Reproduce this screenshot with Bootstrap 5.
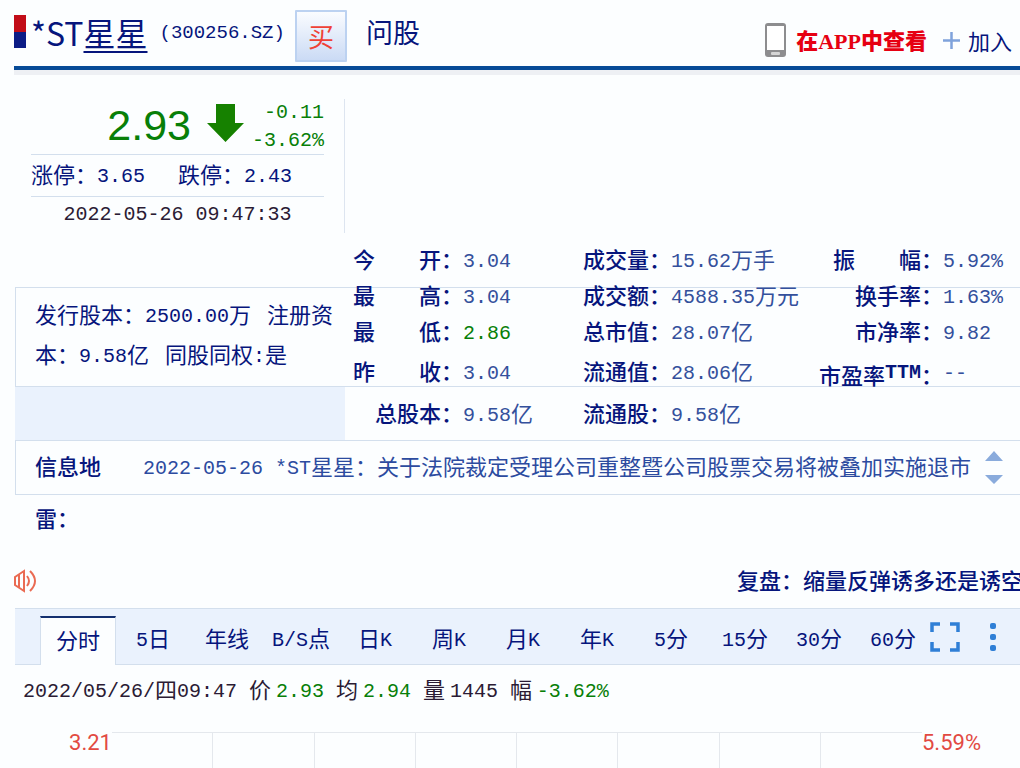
<!DOCTYPE html>
<html lang="zh-CN">
<head>
<meta charset="utf-8">
<meta name="viewport" content="width=device-width, initial-scale=1">
<title>*ST星星 (300256.SZ)</title>
<link href="https://cdn.jsdelivr.net/npm/bootstrap@5.3.0/dist/css/bootstrap.min.css" rel="stylesheet">
<script src="https://cdn.jsdelivr.net/npm/bootstrap@5.3.0/dist/js/bootstrap.bundle.min.js"></script>
<style>
:root{--navy:#06157c;--soft:#34509c;--rule:#d3dfed;--fall:#087f08;--pale:#eaf2fd}
body{background:#fcfeff;color:var(--navy);font:22px/36px "Noto Sans CJK SC",sans-serif;overflow-x:hidden}
a{color:inherit;text-decoration:none}
button{font-family:inherit;color:inherit}
.num{font:20px/20px "Liberation Mono","Noto Sans CJK SC",monospace;vertical-align:1px}
.fall{color:var(--fall)}
.page{padding-left:14px}
.topbar{height:70px;padding-top:6px;border-bottom:4px solid #074b97;box-shadow:0 5px 0 #eef0f4}
.flag{width:12px;height:33px;margin-bottom:9px;background:linear-gradient(#c20d18 52%,#0c1c86 52%)}
.stock{font:32px/44px "Noto Sans CJK SC",sans-serif;margin:0 0 9px 5px}
.stock a{text-decoration:underline;text-decoration-thickness:2px;text-underline-offset:5px}
.code{font-size:19px;margin:0 10px 6px 12px}
.buy{width:52px;height:52px;padding:0;border:2px solid #bcd2f1;border-radius:1px;background:linear-gradient(#fafcff,#cbdbf5);color:#ef4136;font-size:26px}
.ask{font-size:27px;margin:0 0 9px 19px}
.inapp{color:#e60012;font:bold 22px/36px "Liberation Serif","Noto Sans CJK SC",serif}
.inapp b{font:900 22px/36px "Noto Sans CJK SC",sans-serif}
.overview{display:grid;grid-template-columns:331px 1fr;grid-template-rows:minmax(217px,auto) minmax(100px,auto) minmax(53px,auto)}
.quote{grid-area:1/1;margin:29px 0 54px;padding:0 20px 0 17px;border-right:1px solid #dde5f0}
.pricebox{height:56px;border-bottom:1px solid var(--rule)}
.price{font:43px/52px "Liberation Sans",sans-serif}
.change{line-height:28px;margin-top:-4px}
.limits{height:42px;padding-bottom:6px;border-bottom:1px solid var(--rule)}
.stamp{padding-top:8px;color:#2b1b34}
.band{grid-area:2/1/3/3;border:1px solid var(--rule);border-right:0;margin-left:1px}
.issue{width:330px;padding:5px 0 13px 19px;line-height:40px}
.filler{grid-area:3/1;background:var(--pale);margin-left:1px}
.stats{grid-area:1/2/4/3;align-self:end;table-layout:fixed;width:100%;margin-bottom:8px;border-collapse:collapse}
.stats th{font-weight:500;text-align:right;white-space:pre}
.stats td{color:var(--soft);white-space:nowrap}
.stats th,.stats td{padding:0;height:36px;line-height:36px}
.stats .tall>*{height:44px}
.stats .low>*{height:40px}
.stats .ttm{padding-top:8px}
.stats sup{font:bold 20px/20px "Liberation Mono",monospace;top:-6px}
.news{height:55px;margin-left:1px;padding-left:19px;border:1px solid var(--rule);border-right:0}
.news-label{width:108px;padding-right:32px;line-height:52px;margin-top:-2px;font-weight:500}
.news a{color:#2c4b9f;line-height:48px}
.voice{margin-top:68px;height:36px}
.marquee{flex:0 0 283px;font-weight:500;padding-bottom:4px}
.period{height:57px;margin:9px 0 0 1px;padding-left:25px;background:var(--pale);border:solid var(--rule);border-width:1px 0}
.period .tab{flex:1 0 0;margin-top:7px;padding:0 0 6px;border:0;background:none;font-size:22px;line-height:40px;white-space:nowrap}
.period .tab.active{background:#fcfeff;border:solid var(--rule);border-width:2px 1px 0;border-top-color:#14306f;margin-bottom:-1px}
.tools{width:90px}
.tools button{border:0;background:none;padding:0;line-height:0}
.readout{color:#2b1b34;padding:5px 0 0 9px;white-space:pre}
.chart{display:grid;grid-template-columns:98px repeat(8,1fr) 98px;margin-top:26px;height:38px;color:#e24a42;font:22px/22px Roboto,sans-serif}
.chart i{border-top:1px solid #e4e8ed;border-right:1px solid #e4e8ed}
.chart i:nth-of-type(8){border-right:0}
</style>
</head>
<body>
<main class="page">
  <header class="topbar d-flex align-items-center">
    <span class="flag"></span>
    <h1 class="stock text-nowrap">*ST<a href="#">星星</a></h1>
    <span class="num code">(300256.SZ)</span>
    <button type="button" class="buy">买</button>
    <a href="#" class="ask">问股</a>
    <div class="d-flex align-items-center ms-auto pt-2 text-nowrap">
      <svg class="me-2" width="24" height="36" viewBox="0 0 24 36" aria-hidden="true"><rect x="1" y="1" width="21" height="34" rx="3" fill="#8d8d8f"/><rect x="3" y="4" width="17" height="24" fill="#fff"/><rect x="7" y="30" width="9" height="3" rx="1" fill="#d5d5d5"/></svg>
      <a href="#" class="inapp"><b>在</b>APP<b>中查看</b></a>
      <a href="#" class="d-flex align-items-center ms-2 me-2 ps-1"><svg class="me-2 ms-1" width="17" height="17" viewBox="0 0 17 17" aria-hidden="true"><path d="M8.500 0V17M0 8.500H17" stroke="#7fa3dc" stroke-width="2.500"/></svg>加入</a>
    </div>
  </header>

  <section class="overview">
    <div class="quote">
      <div class="pricebox d-flex justify-content-end">
        <span class="price fall">2.93</span>
        <svg class="ms-3 me-2 mt-1" width="37" height="40" viewBox="0 0 37 40" aria-hidden="true"><path d="M9 1H28V20H37L18.500 39L0 20H9Z" fill="#168100"/></svg>
        <div class="change fall text-end"><div><span class="num">-0.11</span></div><div><span class="num">-3.62%</span></div></div>
      </div>
      <div class="limits d-flex align-items-center">
        <span>涨停：<span class="num">3.65</span></span>
        <span class="ms-auto me-4 pe-2">跌停：<span class="num">2.43</span></span>
      </div>
      <div class="num text-center stamp">2022-05-26 09:47:33</div>
    </div>
    <div class="band">
      <div class="issue">发行股本：<span class="num">2500.00</span>万<span class="ms-3">注册资本：</span><span class="num">9.58</span>亿<span class="ms-3">同股同权<span class="num">:</span>是</span></div>
    </div>
    <div class="filler"></div>
    <table class="stats">
      <colgroup><col style="width:118px"><col style="width:120px"><col style="width:88px"><col><col style="width:124px"><col style="width:77px"></colgroup>
      <tbody>
      <tr><th scope="row">今　　开：</th><td><span class="num">3.04</span></td><th scope="row">成交量：</th><td><span class="num">15.62</span>万手</td><th scope="row">振　　幅：</th><td><span class="num">5.92%</span></td></tr>
      <tr><th scope="row">最　　高：</th><td><span class="num">3.04</span></td><th scope="row">成交额：</th><td><span class="num">4588.35</span>万元</td><th scope="row">换手率：</th><td><span class="num">1.63%</span></td></tr>
      <tr><th scope="row">最　　低：</th><td><span class="num fall">2.86</span></td><th scope="row">总市值：</th><td><span class="num">28.07</span>亿</td><th scope="row">市净率：</th><td><span class="num">9.82</span></td></tr>
      <tr class="tall"><th scope="row">昨　　收：</th><td><span class="num">3.04</span></td><th scope="row">流通值：</th><td><span class="num">28.06</span>亿</td><th scope="row" class="ttm">市盈率<sup>TTM</sup>：</th><td><span class="num">--</span></td></tr>
      <tr class="low"><th scope="row">总股本：</th><td><span class="num">9.58</span>亿</td><th scope="row">流通股：</th><td><span class="num">9.58</span>亿</td><td></td><td></td></tr>
      </tbody>
    </table>
  </section>

  <section class="news d-flex">
    <div class="news-label flex-shrink-0">信息地雷：</div>
    <a href="#" class="text-nowrap"><span class="num">2022-05-26 *ST</span>星星：关于法院裁定受理公司重整暨公司股票交易将被叠加实施退市</a>
    <svg class="ms-auto me-3 mt-2 flex-shrink-0" width="20" height="38" viewBox="0 0 20 38" aria-hidden="true"><path d="M1 12L10 2L19 12ZM1 26H19L10 35Z" fill="#8aabdc"/></svg>
  </section>

  <div class="voice d-flex align-items-center">
    <svg width="23" height="24" viewBox="0 0 23 24" fill="none" stroke="#ea6b53" stroke-width="2" aria-hidden="true"><path d="M1 8L10 2V22L1 16ZM5 6V18M13 7Q17 12 13 17M16 2Q26 12 16 22"/></svg>
    <a href="#" class="marquee ms-auto text-nowrap overflow-hidden">复盘：缩量反弹诱多还是诱空</a>
  </div>

  <nav class="period d-flex">
    <button type="button" class="tab active">分时</button>
    <button type="button" class="tab"><span class="num">5</span>日</button>
    <button type="button" class="tab">年线</button>
    <button type="button" class="tab"><span class="num">B/S</span>点</button>
    <button type="button" class="tab">日<span class="num">K</span></button>
    <button type="button" class="tab">周<span class="num">K</span></button>
    <button type="button" class="tab">月<span class="num">K</span></button>
    <button type="button" class="tab">年<span class="num">K</span></button>
    <button type="button" class="tab"><span class="num">5</span>分</button>
    <button type="button" class="tab"><span class="num">15</span>分</button>
    <button type="button" class="tab"><span class="num">30</span>分</button>
    <button type="button" class="tab"><span class="num">60</span>分</button>
    <div class="tools d-flex align-items-center justify-content-between flex-shrink-0 pe-4">
      <button type="button" aria-label="全屏"><svg width="30" height="30" viewBox="0 0 30 30"><path d="M2 10V2H10M20 2H28V10M28 20V28H20M10 28H2V20" fill="none" stroke="#2f7fd6" stroke-width="3.500"/></svg></button>
      <button type="button" aria-label="更多"><svg width="6" height="28" viewBox="0 0 6 28" fill="#2f7fd6"><rect width="6" height="6" rx="2"/><rect y="11" width="6" height="6" rx="2"/><rect y="22" width="6" height="6" rx="2"/></svg></button>
    </div>
  </nav>

  <div class="readout"><span class="num">2022/05/26/</span>四<span class="num">09:47 </span>价 <span class="num fall">2.93 </span>均 <span class="num fall">2.94 </span>量 <span class="num">1445 </span>幅 <span class="num fall">-3.62%</span></div>

  <div class="chart">
    <span class="text-end">3.21</span>
    <i></i><i></i><i></i><i></i><i></i><i></i><i></i><i></i>
    <span>5.59%</span>
  </div>
</main>
</body>
</html>
